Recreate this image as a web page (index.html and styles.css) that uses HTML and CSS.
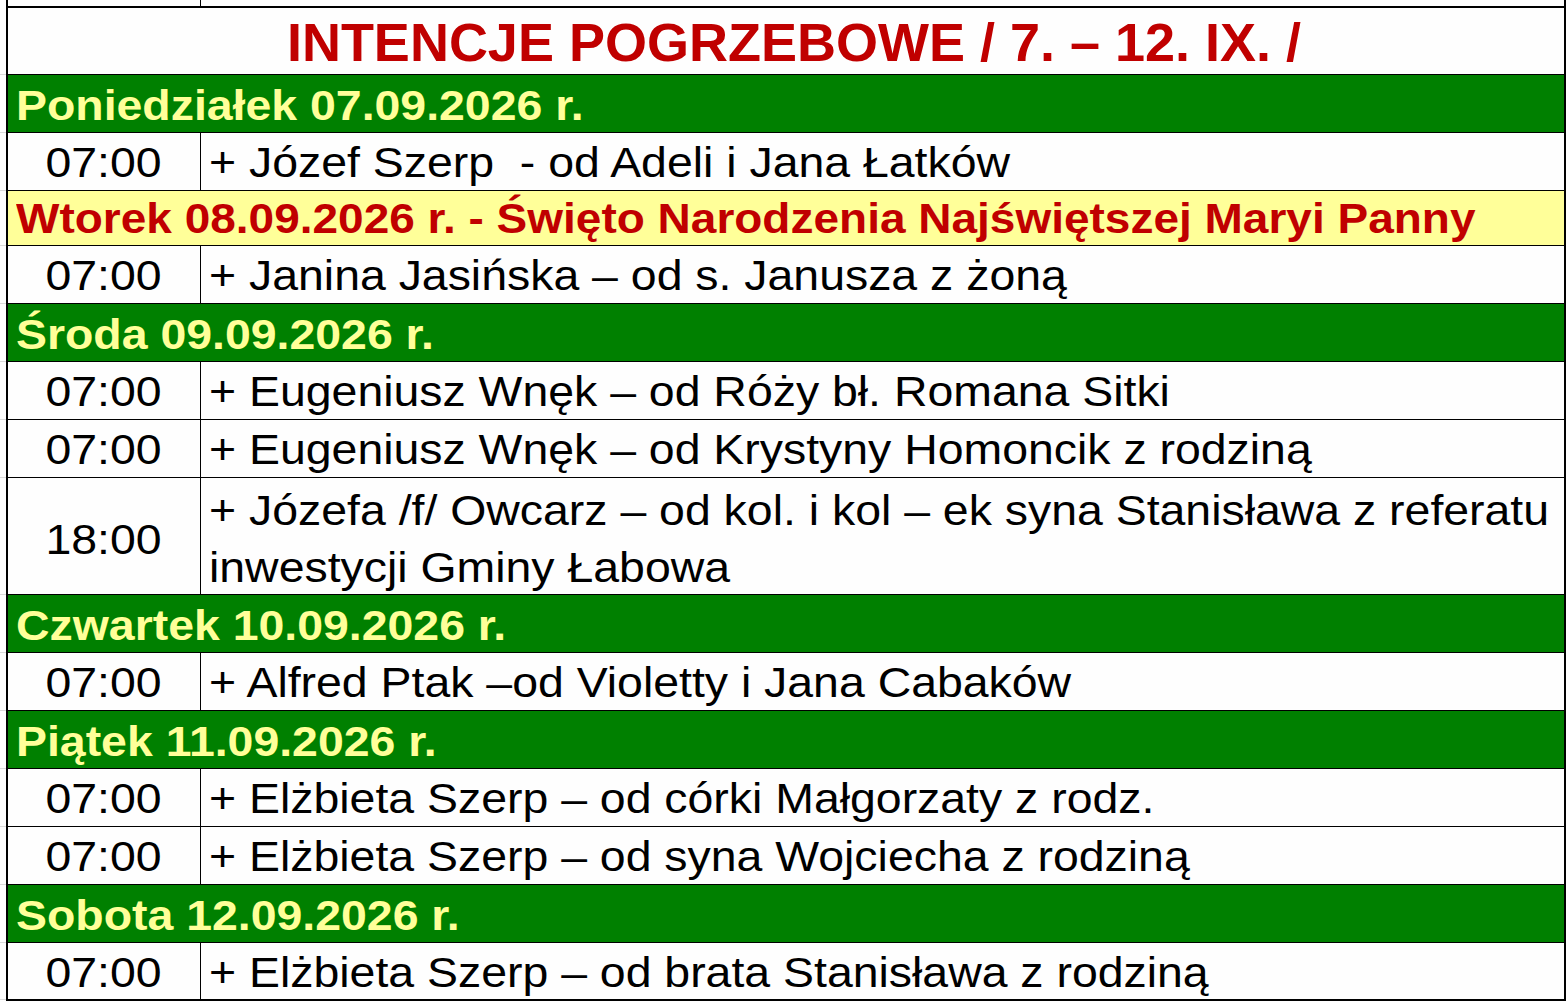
FILE: index.html
```html
<!DOCTYPE html>
<html lang="pl">
<head>
<meta charset="utf-8">
<title>Intencje pogrzebowe</title>
<link rel="stylesheet" href="styles.css">
</head>
<body>
<div class="sheet">
  <div class="prev"><div class="prev-time"></div></div>
  <div class="table">
    <div class="title">INTENCJE POGRZEBOWE / 7. – 12. IX. /</div>

    <div class="day"><span class="sx">Poniedziałek 07.09.2026 r.</span></div>
    <div class="item"><div class="time"><span class="sx">07:00</span></div><div class="text"><span class="sx">+ Józef Szerp&nbsp; - od Adeli i Jana Łatków</span></div></div>

    <div class="day feast"><span class="sx">Wtorek 08.09.2026 r. - Święto Narodzenia Najświętszej Maryi Panny</span></div>
    <div class="item"><div class="time"><span class="sx">07:00</span></div><div class="text"><span class="sx">+ Janina Jasińska – od s. Janusza z żoną</span></div></div>

    <div class="day"><span class="sx">Środa 09.09.2026 r.</span></div>
    <div class="item"><div class="time"><span class="sx">07:00</span></div><div class="text"><span class="sx">+ Eugeniusz Wnęk – od Róży bł. Romana Sitki</span></div></div>
    <div class="item"><div class="time"><span class="sx">07:00</span></div><div class="text"><span class="sx">+ Eugeniusz Wnęk – od Krystyny Homoncik z rodziną</span></div></div>
    <div class="item double"><div class="time"><span class="sx">18:00</span></div><div class="text"><span class="sx">+ Józefa /f/ Owcarz – od kol. i kol – ek syna Stanisława z referatu<br>inwestycji Gminy Łabowa</span></div></div>

    <div class="day"><span class="sx">Czwartek 10.09.2026 r.</span></div>
    <div class="item"><div class="time"><span class="sx">07:00</span></div><div class="text"><span class="sx">+ Alfred Ptak –od Violetty i Jana Cabaków</span></div></div>

    <div class="day"><span class="sx">Piątek 11.09.2026 r.</span></div>
    <div class="item"><div class="time"><span class="sx">07:00</span></div><div class="text"><span class="sx">+ Elżbieta Szerp – od córki Małgorzaty z rodz.</span></div></div>
    <div class="item"><div class="time"><span class="sx">07:00</span></div><div class="text"><span class="sx">+ Elżbieta Szerp – od syna Wojciecha z rodziną</span></div></div>

    <div class="day"><span class="sx">Sobota 12.09.2026 r.</span></div>
    <div class="item last"><div class="time"><span class="sx">07:00</span></div><div class="text"><span class="sx">+ Elżbieta Szerp – od brata Stanisława z rodziną</span></div></div>
  </div>
</div>
</body>
</html>
```

FILE: styles.css
```css
html, body {
  margin: 0;
  padding: 0;
  background: #fefefe;
}

body {
  font-family: "Liberation Sans", Arial, sans-serif;
  color: #000;
  overflow: hidden;
}

.sheet {
  margin-left: 6px;
  width: 1560px;
}

.prev {
  height: 6px;
  border-left: 2px solid #000;
  border-right: 2px solid #000;
  display: flex;
  background: #fefefe;
}

.prev-time {
  width: 192px;
  border-right: 1px solid #000;
}

.table {
  border: 2px solid #000;
  background: #fefefe;
}

.title,
.day,
.item {
  position: relative;
  border-bottom: 1px solid #000;
}

.title::before,
.day::before,
.item::before {
  content: "";
  position: absolute;
  left: -8px;
  bottom: -1px;
  width: 6px;
  height: 1px;
  background: #d9d9d9;
}

.title {
  box-sizing: border-box;
  height: 67px;
  padding-top: 2px;
  padding-left: 16px;
  line-height: 65px;
  text-align: center;
  font-size: 54px;
  font-weight: bold;
  color: #c00000;
  white-space: nowrap;
}

.sx {
  display: inline-block;
  transform: scaleX(1.105);
  transform-origin: left center;
  white-space: nowrap;
}

.day {
  box-sizing: border-box;
  height: 58px;
  padding-top: 5px;
  line-height: 52px;
  padding-left: 8px;
  background: #008000;
  color: #ffff99;
  font-size: 42px;
  font-weight: bold;
}

.day.feast {
  height: 55px;
  padding-top: 2px;
  line-height: 52px;
  background: #ffff99;
  color: #c00000;
}

.day.feast .sx {
  transform: scaleX(1.095);
}

.item {
  box-sizing: border-box;
  display: flex;
  height: 58px;
  font-size: 42px;
}

.item.last {
  height: 56px;
  border-bottom: none;
}

.time,
.text {
  box-sizing: border-box;
  padding-top: 3px;
  line-height: 54px;
}

.item.last .time,
.item.last .text {
  padding-top: 3px;
  line-height: 53px;
}

.time {
  width: 193px;
  flex: none;
  border-right: 1px solid #000;
  text-align: center;
}

.time .sx {
  transform-origin: center center;
}

.text {
  flex: 1;
  padding-left: 8px;
}

.item.double {
  height: 117px;
}

.item.double .time {
  padding-top: 8px;
  display: flex;
  align-items: center;
  justify-content: center;
}

.item.double .text {
  padding-top: 4px;
  line-height: 57px;
}
```
